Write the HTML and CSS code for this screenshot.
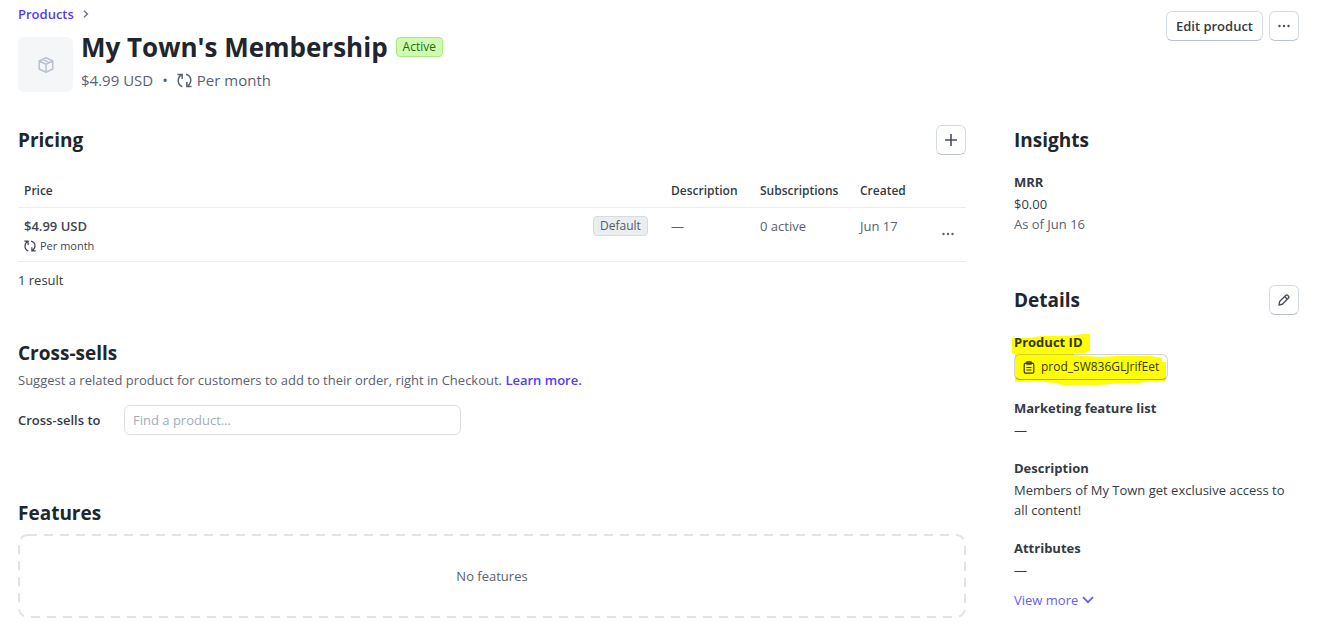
FILE: index.html
```html
<!DOCTYPE html>
<html lang="en">
<head>
<meta charset="utf-8">
<title>My Town's Membership</title>
<link rel="stylesheet" href="styles.css">
</head>
<body>
<svg class="sprite" aria-hidden="true">
  <symbol id="recur" viewBox="0 0 16 16">
    <g fill="none" stroke="currentColor" stroke-width="1.600">
      <path d="M.5 1.500H5.500V6.500M5.200 1.800C2.800 3.200 1.300 5.400 1.300 8.200c0 2.900 1.700 5.200 4.400 6.400"/>
      <path d="M15.500 14.500H10.500V9.500M10.800 14.200c2.400-1.400 3.900-3.600 3.900-6.400 0-2.900-1.700-5.500-5.200-6.400"/>
    </g>
  </symbol>
  <symbol id="dots" viewBox="0 0 12 12">
    <g fill="currentColor"><circle cx="1.500" cy="6" r="1.200"/><circle cx="6" cy="6" r="1.200"/><circle cx="10.500" cy="6" r="1.200"/></g>
  </symbol>
</svg>
<div class="page">
  <header class="header">
    <div class="header-info">
      <nav class="crumbs" aria-label="Breadcrumb">
        <a href="#products">Products</a>
        <svg width="6" height="8" viewBox="0 0 6 8"><path d="M1 .8 4.400 4 1 7.200" fill="none" stroke="#6c7688" stroke-width="1.500"/></svg>
      </nav>
      <div class="product">
        <div class="thumb">
          <svg width="16" height="16" viewBox="0 0 16 16" fill="none" stroke="#b9c2ce" stroke-width="1.500" stroke-linejoin="round"><path d="M8 .8 14.800 4v8L8 15.200 1.200 12V4zM1.200 4 8 7.200 14.800 4M8 7.200v8M4.600 2.400 11.400 5.600"/></svg>
        </div>
        <div class="product-text">
          <div class="title-row"><h1>My Town's Membership</h1><span class="badge badge-active">Active</span></div>
          <div class="subtitle"><span>$4.99 USD</span><span class="bullet">•</span><span class="interval"><svg width="15" height="15"><use href="#recur"/></svg>Per month</span></div>
        </div>
      </div>
    </div>
    <div class="actions">
      <button class="btn" type="button">Edit product</button>
      <button class="btn btn-icon" type="button" aria-label="More actions"><svg width="12" height="12"><use href="#dots"/></svg></button>
    </div>
  </header>

  <div class="columns">
    <main class="main">
      <section>
        <div class="section-head">
          <h2>Pricing</h2>
          <button class="btn btn-icon" type="button" aria-label="Add price"><svg width="12" height="12" viewBox="0 0 12 12"><path d="M6 0v12M0 6h12" stroke="currentColor" stroke-width="1.600"/></svg></button>
        </div>
        <table class="prices">
          <colgroup><col><col class="col-tag"><col class="col-desc"><col class="col-subs"><col class="col-created"><col class="col-more"></colgroup>
          <thead><tr><th>Price</th><th></th><th>Description</th><th>Subscriptions</th><th>Created</th><th></th></tr></thead>
          <tbody>
            <tr>
              <td><div class="amount">$4.99 USD</div><div class="per"><svg width="12" height="12"><use href="#recur"/></svg>Per month</div></td>
              <td><span class="badge badge-default">Default</span></td>
              <td>—</td><td>0 active</td><td>Jun 17</td>
              <td class="more"><button class="plain" type="button" aria-label="Price actions"><svg width="12" height="12"><use href="#dots"/></svg></button></td>
            </tr>
          </tbody>
        </table>
        <p class="count">1 result</p>
      </section>

      <section class="cross">
        <div class="section-head"><h2>Cross-sells</h2></div>
        <p class="hint">Suggest a related product for customers to add to their order, right in Checkout. <a href="#learn">Learn more.</a></p>
        <div class="field">
          <label for="cross">Cross-sells to</label>
          <input id="cross" type="text" placeholder="Find a product…">
        </div>
      </section>

      <section class="features">
        <div class="section-head"><h2>Features</h2></div>
        <div class="empty">
          <svg class="empty-frame" aria-hidden="true"><rect x="1" y="1" rx="9"/></svg>
          No features
        </div>
      </section>
    </main>

    <aside class="side">
      <section>
        <div class="section-head"><h2>Insights</h2></div>
        <dl><div><dt>MRR</dt><dd>$0.00</dd><dd class="muted">As of Jun 16</dd></div></dl>
      </section>
      <section class="details">
        <div class="section-head">
          <h2>Details</h2>
          <button class="btn btn-icon" type="button" aria-label="Edit details"><svg width="12" height="12" viewBox="0 0 12 12" fill="none" stroke="currentColor" stroke-width="1.400" stroke-linejoin="round"><path d="M1 11l.6-3.400L8 1.200c1-1 3.600 1.400 2.700 2.500L4.300 10.300zM6.600 2.600l2.700 2.700"/></svg></button>
        </div>
        <dl>
          <div class="marked">
            <svg class="marker" width="156" height="54" viewBox="0 0 156 54" aria-hidden="true"><path d="M0 5H17L30 3H57L72 1H78V18L73 20H62V22L88 24L106 23H138L150 25V29H154V48L140 48 126 50H112L86 52H50L44 50 32 49V48H16L3 49V21L0 20z" fill="#ffff00"/></svg>
            <dt>Product ID</dt>
            <dd><button class="copy" type="button"><svg width="12" height="13" viewBox="0 0 12 13" fill="none" stroke="currentColor" stroke-width="1.200"><rect x="1.200" y="2.200" width="9.600" height="10" rx="1.500"/><path d="M4 .8h4v2.400H4zM3.500 6.500h5M3.500 9h5"/></svg>prod_SW836GLJrifEet</button></dd>
          </div>
          <div><dt>Marketing feature list</dt><dd>—</dd></div>
          <div><dt>Description</dt><dd>Members of My Town get exclusive access to all content!</dd></div>
          <div><dt>Attributes</dt><dd>—</dd></div>
        </dl>
        <button class="view-more" type="button">View more<svg width="12" height="8" viewBox="0 0 12 8"><path d="M1 1.200 6 6.200l5-5" fill="none" stroke="currentColor" stroke-width="1.800"/></svg></button>
      </section>
    </aside>
  </div>
</div>
</body>
</html>
```
FILE: styles.css
```css
* { box-sizing: border-box; }
body, h1, h2, p, dl, dd { margin: 0; }
body {
  background: #fff;
  color: #353a44;
  font: 13px/20px "Open Sans", "Noto Sans", sans-serif;
}
button, input { font: inherit; color: inherit; }
a { color: #533afd; text-decoration: none; font-weight: 600; }
svg { flex: none; }
.sprite { position: absolute; width: 0; height: 0; }

.page { padding: 4px 38px 16px 18px; }
.header { display: flex; justify-content: space-between; align-items: flex-start; margin-bottom: 33px; }
.crumbs { display: flex; align-items: center; gap: 9px; margin-bottom: 5px; }
.product { display: flex; align-items: flex-end; gap: 8px; }
.thumb {
  display: flex; align-items: center; justify-content: center;
  width: 55px; height: 55px; border-radius: 6px; background: #f5f6f8;
}
.title-row { display: flex; align-items: center; gap: 8px; }
h1 { font-size: 26px; line-height: 36px; font-weight: 700; color: #21252c; }
.subtitle { display: flex; align-items: center; gap: 9px; margin-top: 3px; font-size: 15px; line-height: 24px; color: #596171; }
.interval { display: flex; align-items: center; gap: 5px; }
.actions { display: flex; gap: 6px; padding-top: 7px; }

.btn {
  display: flex; align-items: center; justify-content: center;
  height: 30px; padding: 0 9px; background: #fff;
  border: 1px solid #d5dbe3; border-bottom-color: #bcc3ce; border-radius: 6px; font-weight: 600;
}
.btn-icon { width: 30px; padding: 0; color: #474e5a; }
.badge { display: inline-block; height: 20px; padding: 0 6px; border: 1px solid; border-radius: 4px; font-size: 12px; line-height: 18px; font-weight: 500; }
.badge-active { background: #d1fab3; border-color: #a6eb7b; color: #217005; }
.badge-default { background: #ebeef1; border-color: #d5dbe1; color: #545969; vertical-align: top; }

.columns { display: flex; gap: 48px; }
.main { flex: 1; min-width: 0; }
.side { width: 285px; }
.section-head { display: flex; align-items: center; justify-content: space-between; height: 30px; }
h2 { font-size: 19px; line-height: 28px; font-weight: 700; color: #21252c; }

.prices { width: 100%; margin-top: 18px; border-collapse: collapse; table-layout: fixed; }
.prices th { height: 34px; padding: 2px 12px 0; text-align: left; font-size: 12px; font-weight: 600; }
.prices td { height: 54px; padding: 8px 12px 4px; vertical-align: top; color: #596171; }
.prices tr { border-bottom: 1px solid #ebeef1; }
.prices th:first-child, .prices td:first-child { padding-left: 6px; padding-right: 0; }
.col-tag { width: 78px; }
.col-desc { width: 89px; }
.col-subs { width: 100px; }
.col-created { width: 82px; }
.col-more { width: 36px; }
.prices .amount { font-weight: 600; color: #414552; }
.per { display: flex; align-items: center; gap: 4px; font-size: 11px; color: #414552; }
.prices td.more { padding: 0; vertical-align: middle; }
.plain { display: flex; padding: 0; margin: 0 12px; border: 0; background: none; color: #596171; }
.count { margin-top: 8px; }

.cross { margin-top: 48px; }
.hint { margin-top: 2px; color: #596171; }
.field { display: flex; align-items: center; margin-top: 15px; }
.field label { width: 106px; font-weight: 600; }
.field input { width: 337px; height: 30px; padding: 0 8px; border: 1px solid #dcdee2; border-radius: 6px; }
.field input::placeholder { color: #a3acba; opacity: 1; }

.features { margin-top: 63px; }
.empty { position: relative; display: flex; align-items: center; justify-content: center; height: 84px; margin-top: 6px; color: #596171; }
.empty-frame { position: absolute; inset: 0; width: 100%; height: 100%; }
.empty-frame rect {
  width: calc(100% - 2px); height: calc(100% - 2px);
  fill: none; stroke: #e0e4e9; stroke-width: 2; stroke-dasharray: 9 7;
}

.side dl { display: grid; gap: 18px; margin-top: 17px; }
dt { font-weight: 700; margin-bottom: 2px; }
.muted { color: #596171; }
.details { margin-top: 51px; }
.marked { position: relative; isolation: isolate; }
.marker { position: absolute; left: -2px; top: 1px; z-index: -1; }
.copy {
  display: flex; align-items: center; gap: 6px; height: 26px; padding: 0 8px;
  border: 1px solid rgba(100, 115, 145, 0.3); border-bottom-color: rgba(70, 85, 115, 0.5);
  border-radius: 6px; background: none; font-size: 12px; font-weight: 500; color: #35350c;
}
.marked dt { color: #35350c; }
.view-more { display: flex; align-items: center; gap: 4px; margin-top: 10px; padding: 0; border: 0; background: none; color: #675dff; }
```
